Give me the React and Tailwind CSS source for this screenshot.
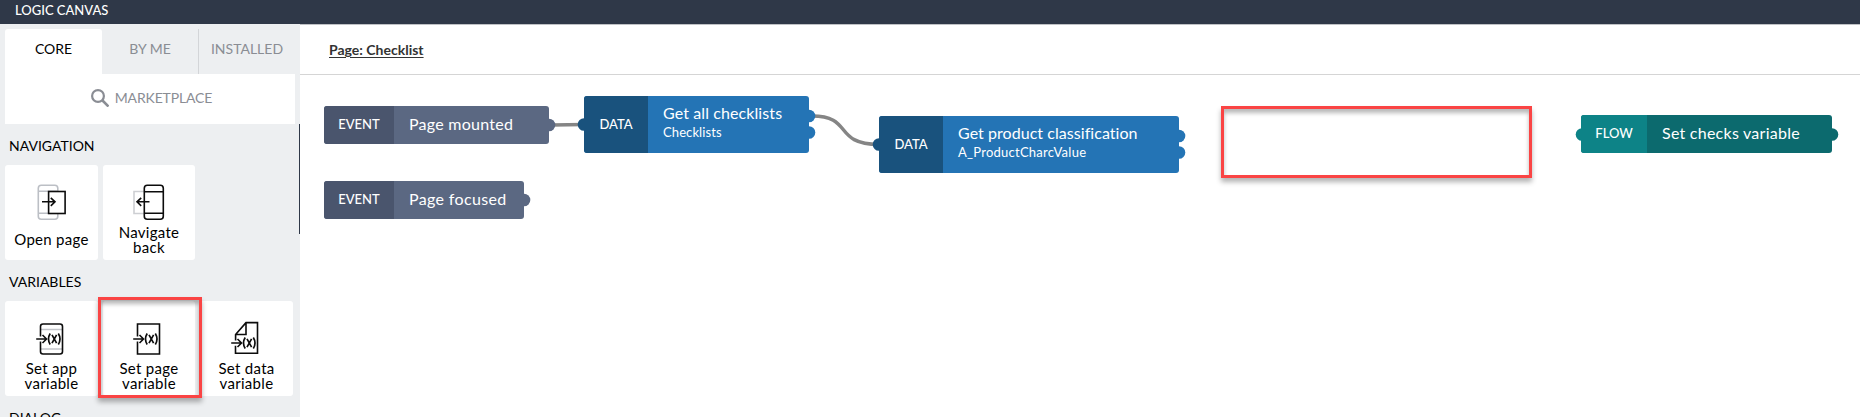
const stroke = { fill: "none", stroke: "#0c0c0c", strokeWidth: 1.6 };

function Icon({ name }) {
  return (
    <svg
      className={`absolute top-[15px] h-[44px] w-[46px] overflow-visible ${name === "back" ? "left-[27px]" : "left-[30px]"}`}
      viewBox="0 0 46 44"
      {...stroke}
    >
      {name === "open" && (
        <>
          <g stroke="#bcbfc5">
            <rect x="3.3" y="5.3" width="19.5" height="34" rx="3" />
            <path d="M3.500 11.300h19M3.500 33.300h19" />
          </g>
          <rect x="13.6" y="11.5" width="16.500" height="22" fill="#fff" />
          <path d="M7 21.800h13M15.800 17.800l4.200 4-4.200 4" />
        </>
      )}
      {name === "back" && (
        <>
          <path d="M14 11.500H4V33.500H14" stroke="#cdcfd3" />
          <rect x="14.300" y="5.300" width="19" height="34" rx="3" fill="#fff" />
          <path d="M14.300 11.800h19M14.300 33.300h19" />
          <path d="M19.500 21.800H7M11.200 17.800L7 21.800l4.200 4" />
        </>
      )}
    </svg>
  );
}

function VarIcon({ name }) {
  const y = name === "data" ? 26 : 22;
  return (
    <svg
      className={`absolute top-4 h-[44px] w-[46px] ${name === "page" ? "left-[27px]" : "left-[28px]"}`}
      viewBox="0 0 46 44"
      {...stroke}
    >
      {name === "app" && (
        <>
          <path d="M8 12.500h21M8 32h21" stroke="#c3c5ca" />
          <path d="M7.500 19.500V9.500q0-2.500 2.500-2.500h17q2.500 0 2.500 2.500v25q0 2.500-2.500 2.500h-17q-2.500 0-2.500-2.500V24.500" />
        </>
      )}
      {name === "page" && <path d="M7.500 19.500V7h22v30h-22V24.500" />}
      {name === "data" && <path d="M7.600 23.500v-6L18 5.600h11.500V36.300h-22v-7.500M18 5.600V17.500H7.600" />}
      <path d={`M3.200 ${y}h10M9.500 ${y - 4}l4 4-4 4`} />
      <path
        strokeWidth="1.7"
        d={`M17.200 ${y - 5.5}q-3.400 5.500 0 11M25.300 ${y - 5.5}q3.400 5.500 0 11M19 ${y - 4.2}l4.600 8.400M23.600 ${y - 4.2}l-4.600 8.400`}
      />
    </svg>
  );
}

function Card({ icon, lines, className }) {
  const variable = ["app", "page", "data"].includes(icon);
  return (
    <div className={`relative flex h-[95px] flex-col items-center rounded-[3px] bg-white ${className}`}>
      {variable ? <VarIcon name={icon} /> : <Icon name={icon} />}
      <div className={`text-center text-[15px] leading-[15px] tracking-[0.3px] ${lines.length === 1 ? "pt-[67px]" : "pt-[60px]"}`}>
        {lines.map((line) => (
          <div key={line}>{line}</div>
        ))}
      </div>
    </div>
  );
}

function Node({ place, tag, tagClass, bodyClass, title, titleClass, subtitle, subtitleClass = "" }) {
  return (
    <div className={`absolute flex overflow-hidden rounded-[3px] text-white ${place} ${bodyClass}`}>
      <div className={`flex shrink-0 items-center justify-center text-[13px] font-medium ${tagClass}`}>{tag}</div>
      <div className={`flex flex-col justify-center pl-[15px] whitespace-nowrap ${subtitle ? "pb-[5px]" : "pb-[2px]"}`}>
        <div className={`text-[16px] leading-5 ${titleClass}`}>{title}</div>
        {subtitle && <div className={`text-[13px] leading-[19px] ${subtitleClass}`}>{subtitle}</div>}
      </div>
    </div>
  );
}

function Wires() {
  return (
    <svg className="absolute inset-0 h-full w-full" viewBox="300 75 1560 342">
      <g fill="none" stroke="#858585" strokeWidth="3.500">
        <path d="M552 125L584 124.500" />
        <path d="M812 116C854 116 832 144 879 144.500" />
      </g>
      <g fill="#5b6882">
        <circle cx="549" cy="125" r="6.300" />
        <circle cx="524" cy="200" r="6.300" />
      </g>
      <g fill="#19527d">
        <circle cx="584" cy="124.500" r="6.300" />
        <circle cx="879" cy="144.500" r="6.300" />
      </g>
      <g fill="#2474b5">
        <circle cx="809" cy="116" r="6.300" />
        <circle cx="809" cy="132.500" r="6.300" />
        <circle cx="1179" cy="136" r="6.300" />
        <circle cx="1179" cy="152.500" r="6.300" />
      </g>
      <circle cx="1582" cy="134.500" r="6.300" fill="#0d8387" />
      <circle cx="1832" cy="134.500" r="6.300" fill="#0c6a6e" />
    </svg>
  );
}

export default function App() {
  const frame = "absolute border-[3px] border-[#fa4444] shadow-[0_4px_5px_rgba(0,0,0,0.3),inset_0_4px_4px_rgba(0,0,0,0.28)]";
  return (
    <div className="flex h-[417px] w-[1860px] flex-col overflow-hidden bg-white font-['Lato',sans-serif] text-black">
      <header className="flex h-6 shrink-0 items-center bg-[#2f3848] pl-[15px] pb-[2px] text-[13px] font-medium text-white">
        LOGIC CANVAS
      </header>
      <div className="flex min-h-0 grow">
        <aside className="relative w-[300px] shrink-0 bg-[#edeff1]">
          <div className="px-[5px] pt-[5px] text-[14px] text-[#8a8d94]">
            <div className="flex h-[45px]">
              <div className="flex w-[97px] items-center justify-center rounded-t-[3px] bg-white pb-[6px] text-black">CORE</div>
              <div className="flex w-[97px] items-center justify-center border-r border-[#d3d5d8] pb-[6px]">BY ME</div>
              <div className="flex w-[96px] items-center justify-center pb-[6px]">INSTALLED</div>
            </div>
            <div className="flex h-[50px] items-center justify-center gap-[6px] bg-white pb-[3px] pl-[3px]">
              <svg className="h-[18px] w-[18px]" viewBox="0 0 18 18" fill="none" stroke="#8a8d94" strokeWidth="2.200">
                <circle cx="7" cy="7" r="5.900" />
                <path d="M11.500 11.500l6 6" strokeWidth="2.600" />
              </svg>
              <span className="tracking-[-0.15px]">MARKETPLACE</span>
            </div>
          </div>
          <div className="px-[5px]">
            <h2 className="flex h-[41px] items-center pt-[2px] pl-1 text-[14px]">NAVIGATION</h2>
            <div className="flex gap-[5px]">
              <Card icon="open" lines={["Open page"]} className="w-[93px]" />
              <Card icon="back" lines={["Navigate", "back"]} className="w-[92px]" />
            </div>
            <h2 className="flex h-[41px] items-center pt-[2px] pl-1 text-[14px]">VARIABLES</h2>
            <div className="flex gap-[5px]">
              <Card icon="app" lines={["Set app", "variable"]} className="w-[93px]" />
              <Card icon="page" lines={["Set page", "variable"]} className="w-[92px]" />
              <Card icon="data" lines={["Set data", "variable"]} className="w-[93px]" />
            </div>
            <h2 className="flex h-[41px] items-center pt-[2px] pl-1 text-[14px]">DIALOG</h2>
          </div>
          <div className="absolute right-0 top-[100px] h-[110px] w-px bg-[#2f3848]" />
          <div className={`${frame} left-[98px] top-[273px] h-[101px] w-[104px]`} />
        </aside>
        <main className="flex grow flex-col">
          <div className="flex h-[51px] shrink-0 items-center border-y border-t-[#bfc1c5] border-b-[#d5d5d5] pl-[29px] text-[14px] font-bold text-[#333]">
            <span className="underline underline-offset-2">Page: Checklist</span>
          </div>
          <div className="relative grow">
            <Wires />
            <Node place="left-[24px] top-[31px] h-[38px] w-[225px]" bodyClass="bg-[#5b6882]" tagClass="w-[70px] bg-[#4a556d]" tag="EVENT" title="Page mounted" titleClass="tracking-[0.25px]" />
            <Node place="left-[24px] top-[106px] h-[38px] w-[200px]" bodyClass="bg-[#5b6882]" tagClass="w-[70px] bg-[#4a556d]" tag="EVENT" title="Page focused" titleClass="tracking-[0.35px]" />
            <Node place="left-[284px] top-[21px] h-[57px] w-[225px]" bodyClass="bg-[#2474b5]" tagClass="w-[64px] bg-[#19527d]" tag="DATA" title="Get all checklists" titleClass="tracking-[0.1px]" subtitle="Checklists" subtitleClass="tracking-[0.1px]" />
            <Node place="left-[579px] top-[41px] h-[57px] w-[300px]" bodyClass="bg-[#2474b5]" tagClass="w-[64px] bg-[#19527d]" tag="DATA" title="Get product classification" titleClass="tracking-[0.05px]" subtitle="A_ProductCharcValue" subtitleClass="tracking-[0.25px]" />
            <Node place="left-[1281px] top-[40px] h-[38px] w-[251px]" bodyClass="bg-[#0c6a6e]" tagClass="w-[66px] bg-[#0d8387]" tag="FLOW" title="Set checks variable" titleClass="tracking-[0.25px]" />
            <div className={`${frame} left-[921px] top-[31px] h-[72px] w-[311px]`} />
          </div>
        </main>
      </div>
    </div>
  );
}
